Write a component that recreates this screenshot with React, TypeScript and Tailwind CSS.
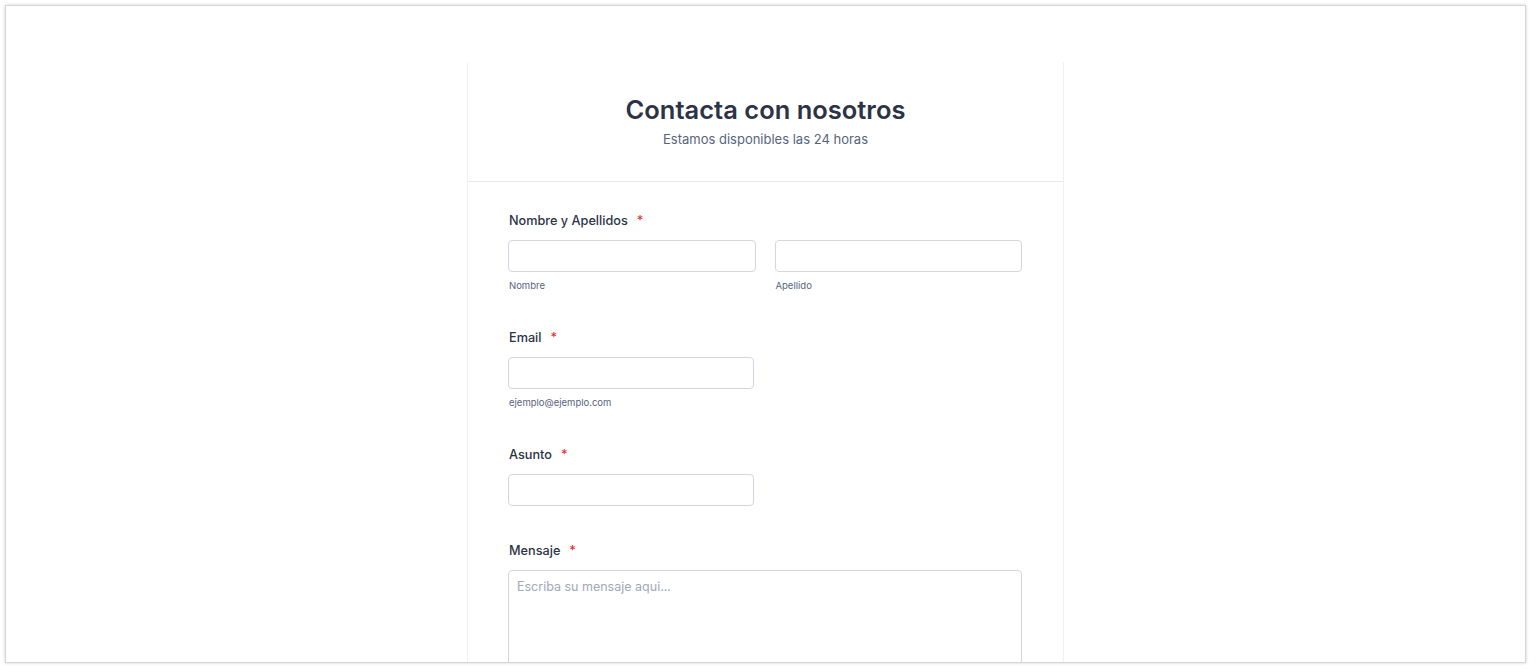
import React from 'react';

const font = { fontFamily: 'Inter, "Noto Sans", sans-serif' };

const Label: React.FC<{ text: string }> = ({ text }) => (
  <label className="flex h-5 items-center pl-[1px] text-[12.7px] font-medium leading-5 text-[#2c3345]">
    {text}
    <span className="ml-[9px] text-[#e52b2b]">*</span>
  </label>
);

const Input: React.FC = () => (
  <input
    type="text"
    className="block h-8 w-full rounded-[4px] border border-[#d3d6e0] bg-white px-2 text-[13px] outline-none"
  />
);

const Sub: React.FC<{ text: string }> = ({ text }) => (
  <div className="mt-[7px] h-[14px] pl-[1px] text-[9.5px] leading-[14px] text-[#57647e]">{text}</div>
);

/**
 * Contact form shown inside a framed browser-like panel
 */
const App: React.FC = () => {
  return (
    <div className="h-screen overflow-hidden bg-white p-[5px]" style={font}>
      <div className="h-[658px] w-[1521px] overflow-hidden border border-[#d6d6d6] bg-white shadow-[0_0_3px_rgba(0,0,0,0.2)]">
        <div className="pt-[56px]">
          <div className="mx-auto w-[597px] border-x border-[#f1f1f3] bg-white">
            {/* header */}
            <div className="border-b border-[#e8e8ec] pt-8 pb-8 text-center">
              <h1 className="text-[25.5px] font-semibold leading-8 text-[#2c3345]">Contacta con nosotros</h1>
              <p className="mt-[3px] text-[13px] leading-5 text-[#57647e]">Estamos disponibles las 24 horas</p>
            </div>

            {/* form */}
            <div className="flex flex-col gap-[35px] pt-[29px] pr-[41px] pb-10 pl-[40px]">
              <div>
                <Label text="Nombre y Apellidos" />
                <div className="mt-[9px] grid grid-cols-2 gap-[19px]">
                  <div>
                    <Input />
                    <Sub text="Nombre" />
                  </div>
                  <div>
                    <Input />
                    <Sub text="Apellido" />
                  </div>
                </div>
              </div>

              <div>
                <Label text="Email" />
                <div className="mt-[9px] w-[246px]">
                  <Input />
                  <Sub text="ejemplo@ejemplo.com" />
                </div>
              </div>

              <div>
                <Label text="Asunto" />
                <div className="mt-[9px] w-[246px]">
                  <Input />
                </div>
              </div>

              <div>
                <Label text="Mensaje" />
                <textarea
                  placeholder="Escriba su mensaje aqui..."
                  className="mt-[9px] block h-[160px] w-full resize-none rounded-[4px] border border-[#d3d6e0] bg-white px-2 py-[6px] text-[12.5px] leading-5 text-[#2c3345] outline-none placeholder:text-[#a0a8b9]"
                />
              </div>
            </div>
          </div>
        </div>
      </div>
    </div>
  );
};

export default App;
